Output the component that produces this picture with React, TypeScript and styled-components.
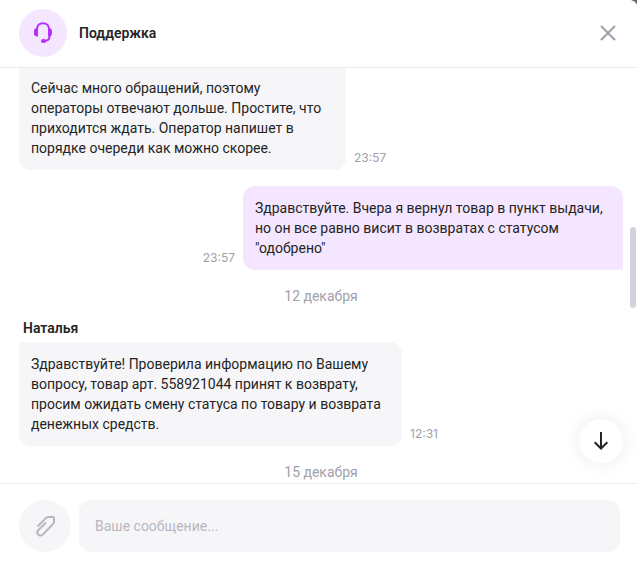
import React from "react";
import styled, { createGlobalStyle } from "styled-components";

const GlobalStyle = createGlobalStyle`
  *, *::before, *::after { box-sizing: border-box; }
  body {
    margin: 0;
    background: #fff;
    color: #242424;
    font-family: Roboto, "Noto Sans", sans-serif;
    font-size: 14px;
    line-height: 20px;
  }
  button, textarea { font: inherit; border: 0; padding: 0; }
  button { cursor: pointer; }
`;

const Chat = styled.main`
  position: relative;
  display: flex;
  flex-direction: column;
  height: 100vh;
  overflow: hidden;
`;

const Header = styled.header`
  display: flex;
  align-items: center;
  flex-shrink: 0;
  gap: 12px;
  padding: 9px 19px 10px;
  border-bottom: 1px solid #e8e8ee;
`;

const Avatar = styled.div`
  display: grid;
  place-items: center;
  width: 48px;
  height: 48px;
  border-radius: 50%;
  background: #f5e6ff;
`;

const Title = styled.h1`
  flex: 1;
  margin: 0;
  font-size: 14px;
  font-weight: 600;
`;

const CloseButton = styled.button`
  display: grid;
  place-items: center;
  width: 20px;
  height: 20px;
  background: none;
  color: #a09fab;
`;

const Corner = styled.svg`
  position: absolute;
  top: 0;
  right: 0;
`;

const Body = styled.div`
  position: relative;
  display: flex;
  flex: 1;
  flex-direction: column;
  min-height: 0;
`;

const Thread = styled.section`
  display: flex;
  flex: 1;
  flex-direction: column;
  justify-content: flex-end;
  gap: 12px;
  min-height: 0;
  overflow: hidden;
  padding: 0 14px 1px 19px;
`;

const MessageRow = styled.div<{ $own?: boolean }>`
  display: flex;
  flex-direction: ${(p) => (p.$own ? "row-reverse" : "row")};
  align-items: flex-end;
  gap: 8px;
  padding-top: ${(p) => (p.$own ? "4px" : "0")};
`;

const radii = {
  own: "12px 12px 2px 12px",
  first: "2px 12px 12px 12px",
  joined: "2px 2px 12px 12px",
};

const Bubble = styled.p<{ $shape: keyof typeof radii; $width: number }>`
  width: ${(p) => p.$width}px;
  max-width: 80%;
  margin: 0;
  padding: 12px;
  border-radius: ${(p) => radii[p.$shape]};
  background: ${(p) => (p.$shape === "own" ? "#f5e6ff" : "#f6f6f9")};
`;

const Time = styled.time`
  padding-bottom: 4px;
  color: #a09fab;
  font-family: Inter, sans-serif;
  font-size: 12px;
  line-height: 16px;
`;

const DateLabel = styled.div`
  padding-top: 4px;
  color: #a09fab;
  text-align: center;
`;

const Group = styled.div`
  display: flex;
  flex-direction: column;
  gap: 4px;
`;

const Author = styled.div`
  padding-left: 4px;
  font-weight: 600;
`;

const ScrollThumb = styled.div`
  position: absolute;
  top: 159px;
  right: 1px;
  width: 6px;
  height: 81px;
  border-radius: 3px;
  background: #d3d2de;
`;

const DownButton = styled.button`
  position: absolute;
  right: 14px;
  bottom: 20px;
  display: grid;
  place-items: center;
  width: 44px;
  height: 44px;
  border-radius: 50%;
  background: #fff;
  color: #242424;
  box-shadow: 0 0 20px rgba(0, 0, 0, 0.08);
`;

const Composer = styled.form`
  display: flex;
  flex-shrink: 0;
  gap: 8px;
  padding: 16px 17px 10px 19px;
  border-top: 1px solid #ededf0;
`;

const AttachButton = styled.button`
  display: grid;
  place-items: center;
  width: 52px;
  height: 52px;
  border-radius: 50%;
  background: #f6f6f9;
  color: #b8b7c1;
`;

const MessageInput = styled.textarea`
  flex: 1;
  min-width: 0;
  height: 52px;
  padding: 16px;
  border-radius: 12px;
  background: #f6f6f9;
  resize: none;
  outline: none;
  overflow: hidden;
  &::placeholder { color: #b8b7c1; opacity: 1; }
`;

export default function App() {
  return (
    <Chat>
      <GlobalStyle />
      <Header>
        <Avatar>
          <svg width="24" height="24" viewBox="0 0 24 24" fill="none" aria-hidden="true">
            <path d="M6 8C6 4.500 8.500 2.200 12 2.200S18 4.500 18 8M18.500 14v1.500c0 3-2 4.300-5.500 4.500" stroke="#b52fff" strokeWidth="2" />
            <path d="M7 7v8.500H6C4 15.500 3 14 3 12.500v-2C3 8.500 4 7 6 7zM17 7v8.500h1c2 0 3-1.500 3-3v-2C21 8.500 20 7 18 7z" fill="#b52fff" />
            <rect x="10" y="18" width="5" height="4" rx="2" fill="#b52fff" />
          </svg>
        </Avatar>
        <Title>Поддержка</Title>
        <CloseButton type="button" aria-label="Закрыть">
          <svg width="20" height="20" viewBox="0 0 20 20" fill="none" aria-hidden="true">
            <path d="M3.500 3.500l13 13M16.500 3.500l-13 13" stroke="currentColor" strokeWidth="2" strokeLinecap="round" />
          </svg>
        </CloseButton>
      </Header>
      <Corner width="6" height="5" viewBox="0 0 6 5" aria-hidden="true">
        <path d="M0 0h6v5Q5 1.500 0 0z" fill="#6b6b6b" />
      </Corner>
      <Body>
        <Thread>
          <MessageRow>
            <Bubble $shape="joined" $width={327}>
              Сейчас много обращений, поэтому операторы отвечают дольше. Простите, что приходится ждать.
              Оператор напишет в порядке очереди как можно скорее.
            </Bubble>
            <Time>23:57</Time>
          </MessageRow>
          <MessageRow $own>
            <Bubble $shape="own" $width={380}>
              Здравствуйте. Вчера я вернул товар в пункт выдачи, но он все равно висит в возвратах с
              статусом "одобрено"
            </Bubble>
            <Time>23:57</Time>
          </MessageRow>
          <DateLabel>12 декабря</DateLabel>
          <Group>
            <Author>Наталья</Author>
            <MessageRow>
              <Bubble $shape="first" $width={383}>
                Здравствуйте! Проверила информацию по Вашему вопросу, товар арт. 558921044 принят к
                возврату, просим ожидать смену статуса по товару и возврата денежных средств.
              </Bubble>
              <Time>12:31</Time>
            </MessageRow>
          </Group>
          <DateLabel>15 декабря</DateLabel>
        </Thread>
        <ScrollThumb />
        <DownButton type="button" aria-label="Вниз">
          <svg width="24" height="24" viewBox="0 0 24 24" fill="none" aria-hidden="true">
            <path d="M12 3v17M5.700 13.200L12 19.500l6.300-6.300" stroke="currentColor" strokeWidth="2" />
          </svg>
        </DownButton>
      </Body>
      <Composer>
        <AttachButton type="button" aria-label="Прикрепить файл">
          <svg width="24" height="24" viewBox="0 0 24 24" fill="none" aria-hidden="true">
            <path d="M4.500 12.500l9-9Q14.500 3 15.500 3H20q1 0 1 1v4q0 1-1 2L9.500 21q-2.500 1.500-4.500-.5t.5-4.500L13 8.500" stroke="currentColor" strokeWidth="2" />
          </svg>
        </AttachButton>
        <MessageInput rows={1} aria-label="Ваше сообщение" placeholder="Ваше сообщение..." />
      </Composer>
    </Chat>
  );
}
